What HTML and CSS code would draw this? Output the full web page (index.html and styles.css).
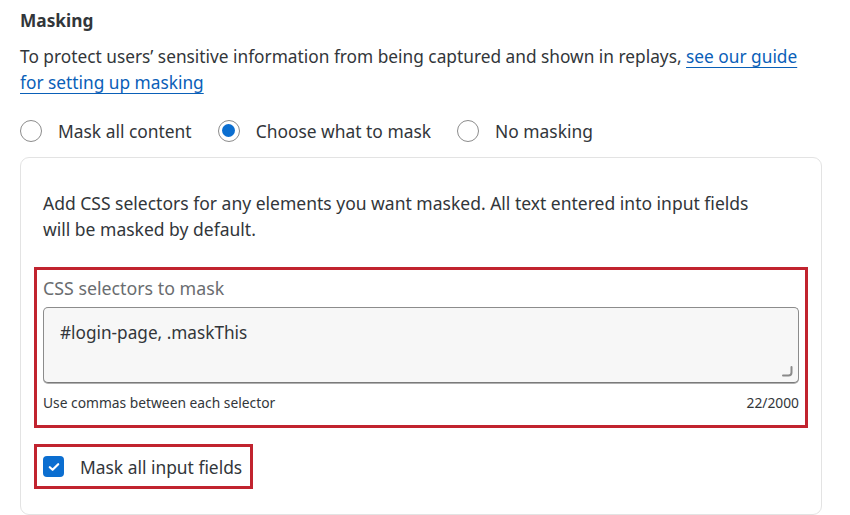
FILE: index.html
```html
<!DOCTYPE html>
<html>
<head>
<meta charset="utf-8">
<link rel="stylesheet" href="styles.css">
</head>
<body>
<div class="page">
  <h2 class="title">Masking</h2>
  <p class="intro">To protect users’ sensitive information from being captured and shown in replays, <a href="#">see our guide for setting up masking</a></p>
  <div class="radios">
    <label class="radio"><span class="dot"></span>Mask all content</label>
    <label class="radio checked"><span class="dot"></span>Choose what to mask</label>
    <label class="radio"><span class="dot"></span>No masking</label>
  </div>
  <div class="card">
    <p class="desc">Add CSS selectors for any elements you want masked. All text entered into input fields will be masked by default.</p>
    <div class="hl field">
      <div class="label">CSS selectors to mask</div>
      <div class="textarea">
        <span class="value">#login-page, .maskThis</span>
        <svg class="grip" width="12" height="12" viewBox="0 0 12 12"><path d="M10.5 2 V7.5 Q10.5 10.5 7.5 10.5 H2" fill="none" stroke="#8a8a8a" stroke-width="2" stroke-linecap="round"/></svg>
      </div>
      <div class="meta"><span>Use commas between each selector</span><span>22/2000</span></div>
    </div>
    <div class="hl check">
      <span class="box"><svg width="12" height="10" viewBox="0 0 12 10"><path d="M1.8 5.2 L4.6 7.8 L10.2 2.2" fill="none" stroke="#fff" stroke-width="2.2" stroke-linecap="round" stroke-linejoin="round"/></svg></span>
      <span>Mask all input fields</span>
    </div>
  </div>
</div>
</body>
</html>
```

FILE: styles.css
```css
* { box-sizing: border-box; }
html, body { margin: 0; padding: 0; background: #fff; }
body {
  font-family: "Noto Sans", "Open Sans", sans-serif;
  color: #32363a;
}
.page {
  padding: 9px 0 0 20px;
  width: 822px;
}
.title {
  margin: 0;
  font-size: 17.3px;
  font-weight: 700;
  line-height: 24px;
}
.intro {
  margin: 11px 0 0 0;
  font-size: 17.3px;
  line-height: 26px;
  width: 790px;
}
.intro a {
  color: #0a60b8;
  text-decoration: underline;
  text-underline-offset: 4px;
  text-decoration-thickness: 1px;
}
.radios {
  display: flex;
  align-items: center;
  margin-top: 22px;
  height: 26px;
}
.radio {
  display: flex;
  align-items: center;
  font-size: 17.4px;
  margin-right: 26px;
}
.dot {
  width: 22px;
  height: 22px;
  border: 1.5px solid #8c8c8c;
  border-radius: 50%;
  margin-right: 16px;
  position: relative;
  background: #fff;
}
.radio.checked .dot::after {
  content: "";
  position: absolute;
  left: 3px;
  top: 3px;
  width: 13px;
  height: 13px;
  border-radius: 50%;
  background: #0b6ed0;
}
.card {
  margin-top: 13px;
  width: 802px;
  height: 358px;
  border: 1.5px solid #e3e3e3;
  border-radius: 9px;
  padding: 0 13px;
}
.desc {
  margin: 32px 0 0 9px;
  font-size: 17.5px;
  line-height: 26px;
  width: 718px;
}
.hl {
  border: 3px solid #c1232f;
}
.field {
  margin-top: 25px;
  width: 774px;
  padding: 6px 6px 0 6px;
  height: 161px;
}
.label {
  font-size: 17.8px;
  line-height: 24px;
  color: #6a6d70;
}
.textarea {
  margin-top: 7px;
  height: 76px;
  border: 1.5px solid #8c8c8c;
  border-bottom-color: #7a7a7a;
  border-radius: 5px;
  background: #f7f7f7;
  box-shadow: 0 1px 0 #b0b0b0;
  padding: 13px 16px;
  font-size: 17.2px;
  position: relative;
}
.grip {
  position: absolute;
  right: 5px;
  bottom: 5px;
}
.meta {
  display: flex;
  justify-content: space-between;
  font-size: 13.8px;
  margin-top: 11px;
  line-height: 18px;
}
.check {
  margin-top: 16px;
  width: 219px;
  height: 45px;
  display: flex;
  align-items: center;
  padding-left: 6px;
  font-size: 17.4px;
}
.box {
  width: 21px;
  height: 21px;
  border-radius: 4px;
  background: #0b6ed0;
  display: flex;
  align-items: center;
  justify-content: center;
  margin-right: 16px;
}
```
